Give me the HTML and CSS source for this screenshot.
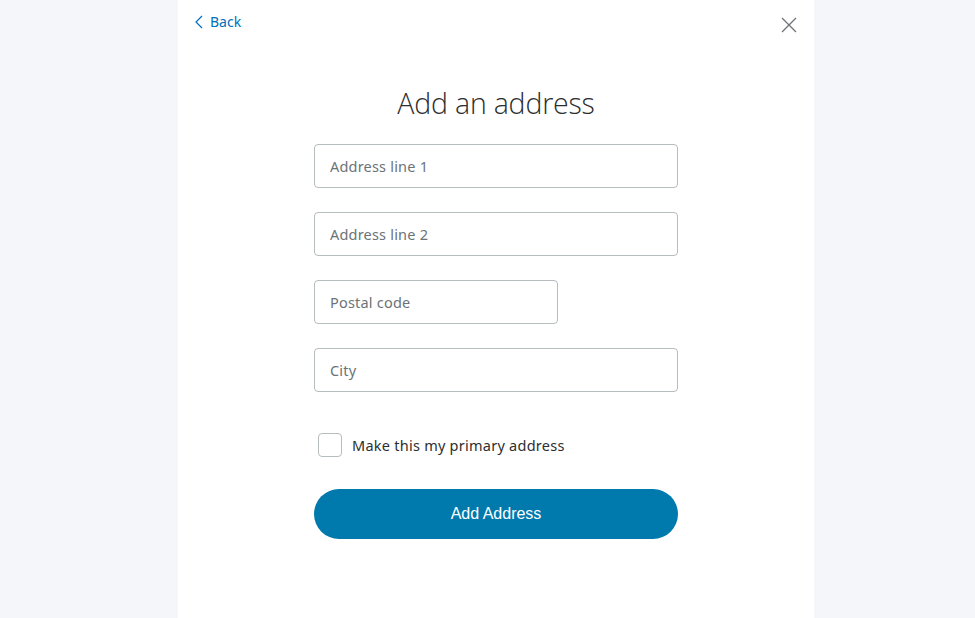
FILE: index.html
```html
<!DOCTYPE html>
<html>
<head>
<meta charset="utf-8">
<link rel="stylesheet" href="styles.css">
</head>
<body>
<div class="page">
  <main class="panel">
    <header class="topbar">
      <a class="back" href="#">
        <svg class="chev" width="8" height="14" viewBox="0 0 8 14"><path d="M7 1 L1 7 L7 13" fill="none" stroke="#0070ba" stroke-width="1.2"/></svg>
        <span>Back</span>
      </a>
      <button class="close" aria-label="Close">
        <svg width="16" height="16" viewBox="0 0 16 16"><path d="M1 1 L15 15 M15 1 L1 15" fill="none" stroke="#6c7378" stroke-width="1.3"/></svg>
      </button>
    </header>
    <h1 class="title">Add an address</h1>
    <form class="form">
      <div class="field"><input class="input" placeholder="Address line 1"></div>
      <div class="field"><input class="input" placeholder="Address line 2"></div>
      <div class="field"><input class="input short" placeholder="Postal code"></div>
      <div class="field"><input class="input" placeholder="City"></div>
      <label class="check">
        <span class="box"></span>
        <span class="check-label">Make this my primary address</span>
      </label>
      <button class="submit" type="button">Add Address</button>
    </form>
  </main>
</div>
</body>
</html>
```
FILE: styles.css
```css
html, body { margin: 0; padding: 0; }
body { background: #f5f6fa; font-family: "Noto Sans", "Open Sans", sans-serif; }
.page { display: flex; justify-content: center; }
.panel {
  width: 636px; min-height: 618px; background: #fff;
  margin-left: 178px; margin-right: 161px; box-sizing: border-box;
  display: flex; flex-direction: column; align-items: center;
}
.topbar {
  width: 100%; box-sizing: border-box; display: flex; justify-content: space-between;
  align-items: flex-start; padding: 13px 17px 0 17px;
}
.back {
  display: flex; align-items: center; gap: 7px; color: #0070ba; text-decoration: none;
  font-size: 14px; line-height: 18px;
}
.chev { margin-top: -1px; }
.close { border: 0; background: none; padding: 0; margin-top: 4px; cursor: pointer; display: block; }
.title {
  font-family: "Open Sans", sans-serif; font-weight: 300; font-size: 28.5px;
  color: #2c2e2f; margin: 47px 0 0 0; line-height: 40px; letter-spacing: -0.2px;
}
.form { width: 364px; display: flex; flex-direction: column; margin-top: 21px; }
.field { margin-bottom: 24px; }
.input {
  box-sizing: border-box; width: 364px; height: 44px; border: 1px solid #b7bcbf;
  border-radius: 4px; padding: 0 15px; font-family: "Noto Sans", sans-serif;
  font-size: 14.5px; color: #2c2e2f; outline: none; display: block;
}
.input::placeholder { color: #6c7378; letter-spacing: 0.2px; }
.input.short { width: 244px; }
.check { display: flex; align-items: center; gap: 10px; margin: 17px 0 0 4px; }
.box { width: 24px; height: 24px; box-sizing: border-box; border: 1px solid #b7bcbf; border-radius: 4px; }
.check-label { font-size: 14.5px; color: #2c2e2f; letter-spacing: 0.25px; }
.submit {
  margin-top: 32px; height: 50px; border: 0; border-radius: 25px; background: #0079ad;
  color: #fff; font-family: "Liberation Sans", Arial, sans-serif; font-size: 16px; cursor: pointer;
}
```
